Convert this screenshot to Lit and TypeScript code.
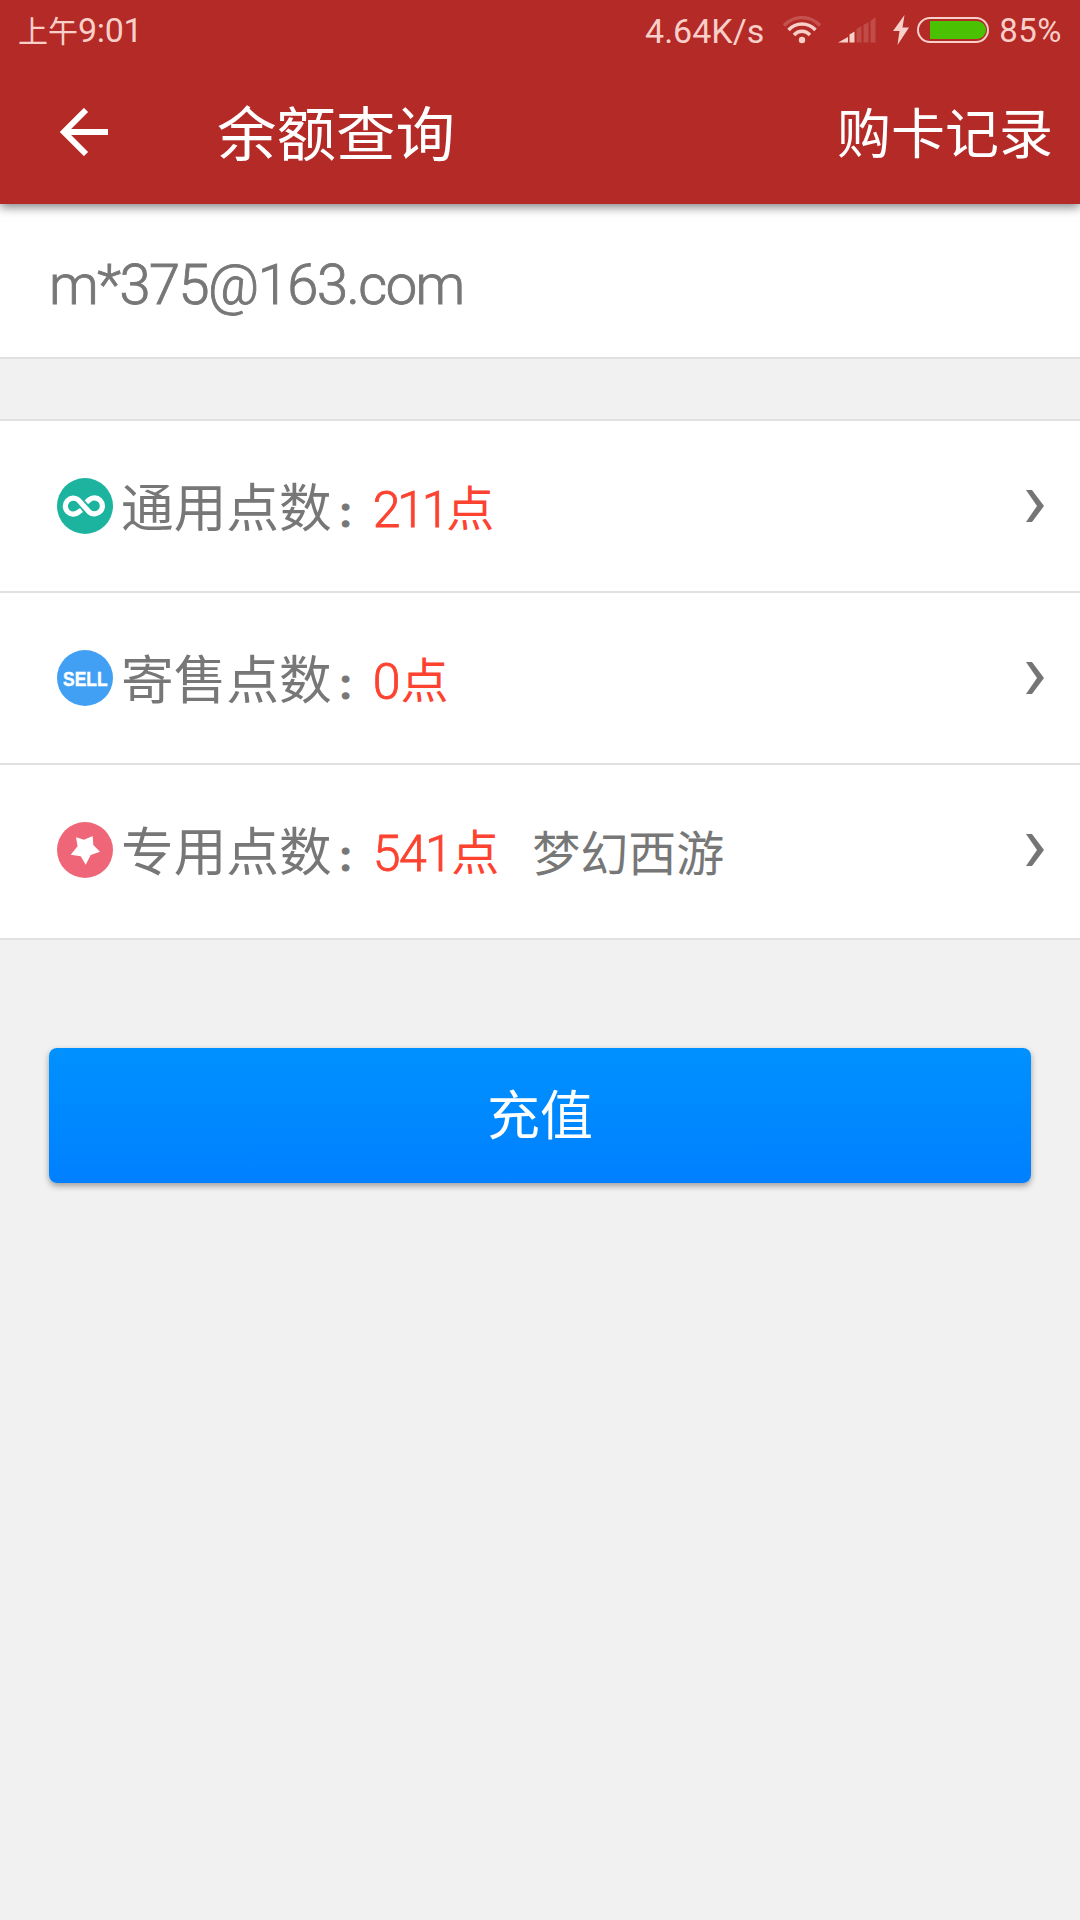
import { LitElement, html, css, svg } from "lit";
import { customElement, property } from "lit/decorators.js";

const infinityIcon = svg`<circle cx="28" cy="28" r="28" fill="#1cb49f"/>
  <path d="M24.5 32 L21.7 34 A8 8 0 1 1 21.5 22 L32.2 34 A8 8 0 1 0 32 22 L29.4 24.3" fill="none" stroke="#fff" stroke-width="5.2"/>`;
const sellIcon = svg`<circle cx="28" cy="28" r="28" fill="#41a0f4"/>
  <text class="sell" x="28.3" y="36" text-anchor="middle" textLength="44.5" lengthAdjust="spacingAndGlyphs">SELL</text>`;
const starIcon = svg`<circle cx="28" cy="28" r="28" fill="#ef6678"/>
  <path d="M19 15.3 L27 17.7 L35.7 14 L36.3 23 L43 29.7 L33.7 33 L28.7 42.8 L23.7 34.3 L13.7 32.7 L20.6 24.3 Z" fill="#fff"/>`;

@customElement("status-bar")
export class StatusBar extends LitElement {
  static styles = css`
    :host { display: flex; align-items: center; height: 62px; padding: 0 18px; box-sizing: border-box;
      color: #f9cfc9; font: 400 34px/40px Roboto, "Noto Sans CJK SC", sans-serif; }
    .time { display: flex; align-items: baseline; flex: 1; padding-bottom: 3px; }
    .cjk { font: 400 30px/40px "Noto Sans CJK SC", sans-serif; }
    .clock { letter-spacing: -.3px; }
    .wifi { margin-left: 19px; }
    .signal { margin-left: 17px; }
    .bolt { margin-left: 17px; }
    .battery { margin-left: 8px; }
    .percent { margin-left: 10px; font-size: 33px; letter-spacing: .5px; }
    svg { display: block; margin-bottom: 2px; }
  `;
  render() {
    return html`
      <div class="time"><span class="cjk">上午</span><span class="clock">9:01</span></div>
      <span class="speed">4.64K/s</span>
      <svg class="wifi" width="38" height="28" viewBox="0 0 38 28" fill="none" stroke="#f9cfc9" stroke-width="3.4">
        <path d="M1 9.5 C11 -1 27 -1 37 9.5" opacity=".25"/>
        <path d="M5.5 14 C13 6 25 6 32.5 14"/>
        <path d="M11 19 C15.5 14 22.5 14 27 19"/>
        <circle cx="19" cy="24" r="3.2" fill="#f9cfc9" stroke="none"/>
      </svg>
      <svg class="signal" width="38" height="26" viewBox="0 0 38 26" fill="#f9cfc9">
        <path d="M0 25.5 L10 20 V25.5 Z"/><path d="M11.5 17.5 L16.5 14.5 V25.5 H11.5 Z"/>
        <g opacity=".2"><path d="M18.5 12 L23.5 9 V25.5 H18.5 Z"/><path d="M25.5 8 L30.5 5 V25.5 H25.5 Z"/><path d="M32.5 4 L37.5 0 V25.5 H32.5 Z"/></g>
      </svg>
      <svg class="bolt" width="16" height="30" viewBox="0 0 16 30" fill="#f9cfc9"><path d="M11.5 0 L0 16 H6.5 L4.5 30 L16 12.5 H9.5 Z"/></svg>
      <svg class="battery" width="72" height="26" viewBox="0 0 72 26">
        <rect x="1" y="1" width="70" height="24" rx="12" fill="none" stroke="#f9cfc9" stroke-width="2"/>
        <path d="M13 4 H60 A9 9 0 0 1 60 22 H13 Z" fill="#4bc103"/>
      </svg>
      <span class="percent">85%</span>
    `;
  }
}

@customElement("nav-bar")
export class NavBar extends LitElement {
  static styles = css`
    :host { display: flex; align-items: center; height: 142px; padding: 0 27px 2px 60px; box-sizing: border-box;
      color: #fff; font-family: "Noto Sans CJK SC", sans-serif; }
    .back { display: block; flex: none; }
    .title { margin-left: 109px; flex: 1; font-size: 59.5px; line-height: 80px; padding-bottom: 4px; }
    .action { font-size: 54px; line-height: 80px; padding-bottom: 3px; }
  `;
  render() {
    return html`
      <svg class="back" width="48" height="48" viewBox="0 0 48 48" fill="none" stroke="#fff" stroke-width="6">
        <path d="M26 2 L4 24 L26 46 M4 24 H48"/>
      </svg>
      <span class="title">余额查询</span>
      <span class="action">购卡记录</span>
    `;
  }
}

@customElement("points-row")
export class PointsRow extends LitElement {
  static styles = css`
    :host { display: flex; align-items: center; height: 172px; padding: 0 36px 0 57px; box-sizing: border-box;
      background: #fff; border-bottom: 2px solid #e1e1e1; font-family: Roboto, "Noto Sans CJK SC", sans-serif; color: #777; }
    .icon { display: block; flex: none; overflow: visible; }
    .sell { font: 700 20px "Liberation Sans", sans-serif; fill: #fff; stroke: #fff; stroke-width: .4px; }
    .text { display: flex; align-items: baseline; flex: 1; margin-left: 8px; padding-top: 9px; line-height: 80px; }
    .label { font-size: 52.7px; }
    .colon { width: 28px; margin-right: 13px; font-size: 42px; font-weight: 700; text-align: center; -webkit-text-stroke: 1px #777; }
    .amount { font-size: 50px; font-weight: 300; color: #fd4230; -webkit-text-stroke: .8px #fd4230; }
    .unit { font-size: 48px; color: #fd4230; transform: translateY(-1px); }
    .game { margin-left: 33px; font-size: 48px; }
    .chevron { display: block; }
  `;
  @property() label = "";
  @property() amount = "";
  @property() game = "";
  @property({ attribute: false }) icon: unknown;
  render() {
    // The figure one is set tighter than the other digits.
    const ones = this.amount.split("1").length - 1;
    return html`
      <svg class="icon" width="56" height="56" viewBox="0 0 56 56">${this.icon}</svg>
      <div class="text">
        <span class="label">${this.label}</span><span class="colon">:</span><span class="amount" style="letter-spacing:${-1.6 * ones}px">${this.amount}</span><span class="unit">点</span>
        ${this.game ? html`<span class="game">${this.game}</span>` : ""}
      </div>
      <svg class="chevron" width="18" height="32" viewBox="0 0 18 32"><path d="M0 0 H6 L18 16 L6 32 H0 L11 16 Z" fill="#757575"/></svg>
    `;
  }
}

@customElement("app-root")
export class AppRoot extends LitElement {
  static styles = css`
    :host { display: flex; flex-direction: column; height: 1920px; background: #f1f1f1; }
    .header { background: #b32a27; height: 204px; box-shadow: 0 3px 10px rgba(0,0,0,.5); z-index: 1; flex: none; }
    .account { box-sizing: border-box; height: 155px; padding: 41px 49px 0; background: #fff; border-bottom: 2px solid #e1e1e1;
      color: #777; font: 300 56px/80px Roboto, sans-serif; letter-spacing: -1.5px; -webkit-text-stroke: .9px #777; }
    .list { margin-top: 60px; border-top: 2px solid #e1e1e1; }
    .last { height: 175px; padding-bottom: 3px; }
    .submit { display: block; margin: 108px 49px 0; height: 135px; border: 0; border-radius: 8px; padding: 0 0 8px;
      background: linear-gradient(#0091ff, #0080ff); box-shadow: 0 3px 6px rgba(0,0,0,.35);
      color: #fff; font: 400 53px/80px "Noto Sans CJK SC", sans-serif; }
  `;
  render() {
    return html`
      <div class="header"><status-bar></status-bar><nav-bar></nav-bar></div>
      <div class="account"><span class="email">m*375@163.com</span></div>
      <div class="list">
        <points-row label="通用点数" amount="211" .icon=${infinityIcon}></points-row>
        <points-row label="寄售点数" amount="0" .icon=${sellIcon}></points-row>
        <points-row class="last" label="专用点数" amount="541" game="梦幻西游" .icon=${starIcon}></points-row>
      </div>
      <button class="submit">充值</button>
    `;
  }
}
